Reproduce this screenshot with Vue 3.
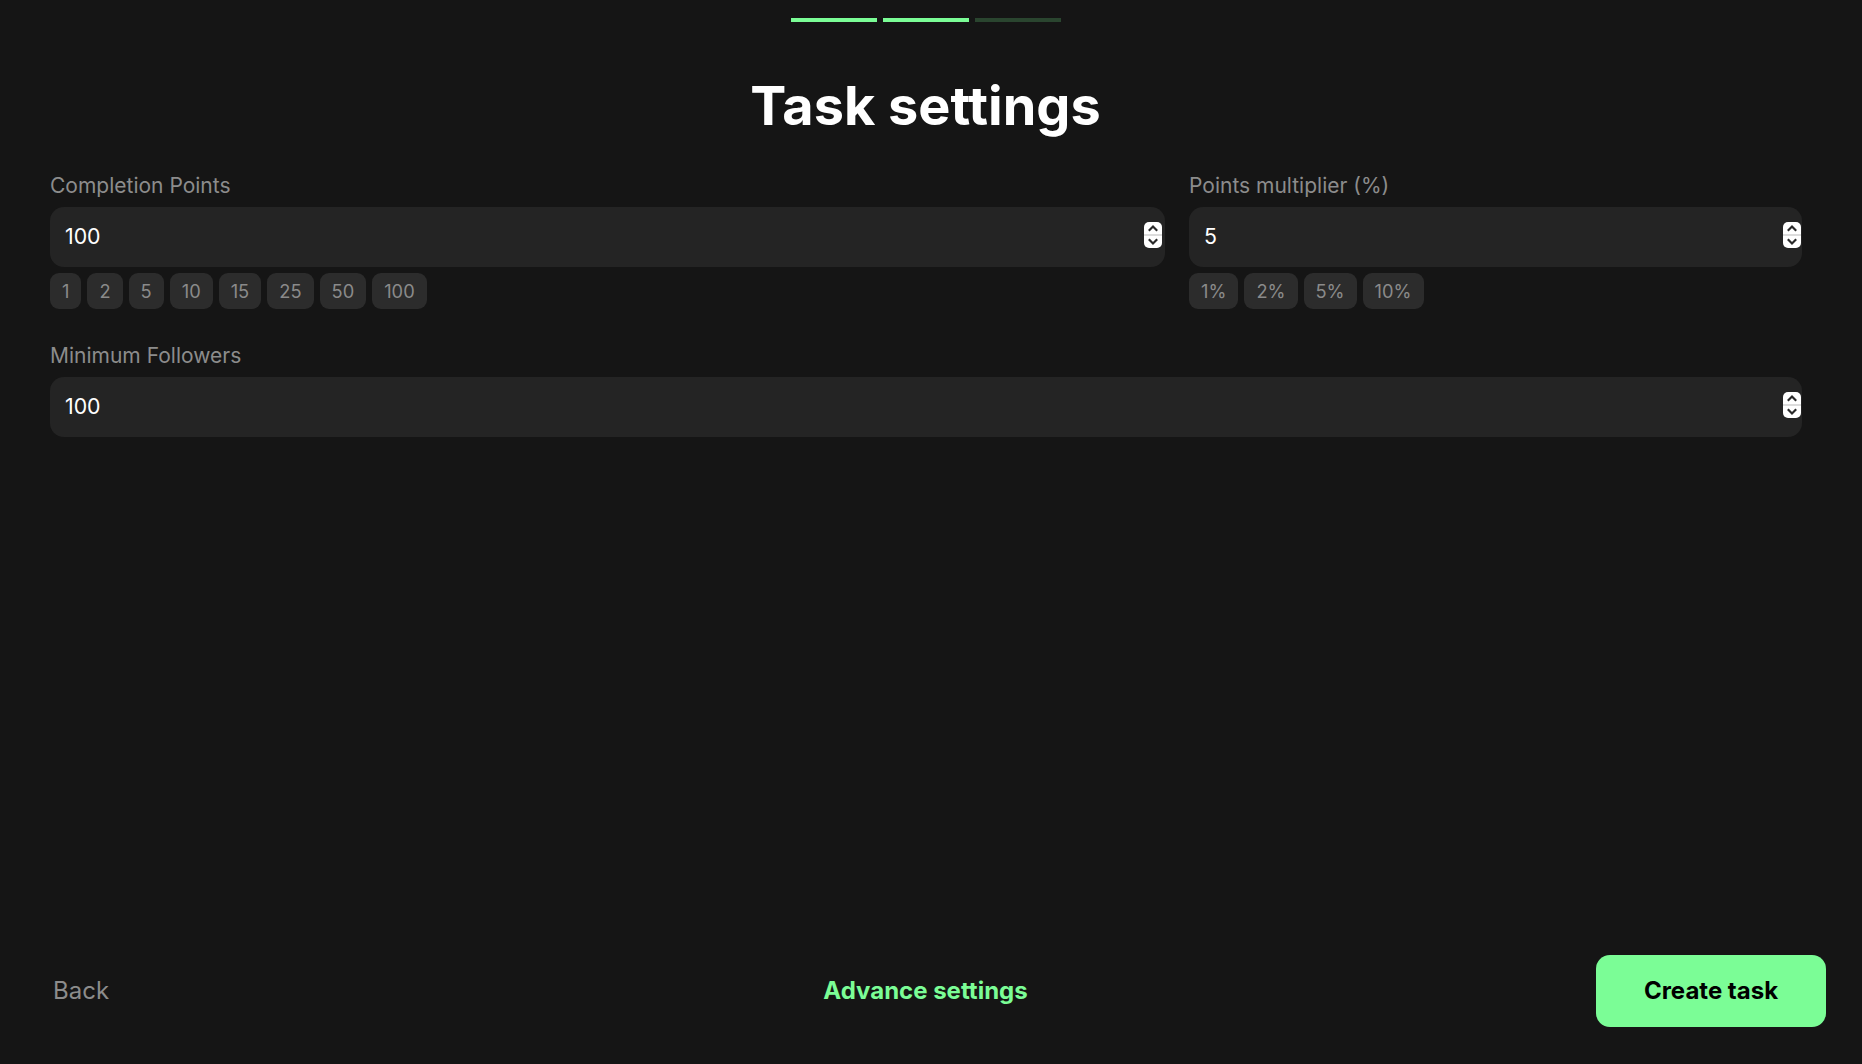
<template>
  <div class="page">
    <div class="steps">
      <span class="step on"></span>
      <span class="step on"></span>
      <span class="step"></span>
    </div>
    <h1 class="title">Task settings</h1>

    <div class="form">
      <div class="row">
        <div class="field grow">
          <label class="label">Completion Points</label>
          <div class="input">
            <span class="value">100</span>
            <svg class="spin" width="18" height="26" viewBox="0 0 18 26">
              <rect width="18" height="26" rx="5" fill="#fff" />
              <rect y="12" width="18" height="2" fill="#dcdcdc" />
              <path d="M4.8 8.7l4.2-4.2 4.2 4.2M4.8 17.3l4.2 4.2 4.2-4.2" fill="none" stroke="#2a2a2a" stroke-width="2.2" />
            </svg>
          </div>
          <div class="chips">
            <button v-for="p in points" :key="p" class="chip">{{ p }}</button>
          </div>
        </div>
        <div class="field side">
          <label class="label">Points multiplier (%)</label>
          <div class="input">
            <span class="value">5</span>
            <svg class="spin" width="18" height="26" viewBox="0 0 18 26">
              <rect width="18" height="26" rx="5" fill="#fff" />
              <rect y="12" width="18" height="2" fill="#dcdcdc" />
              <path d="M4.8 8.7l4.2-4.2 4.2 4.2M4.8 17.3l4.2 4.2 4.2-4.2" fill="none" stroke="#2a2a2a" stroke-width="2.2" />
            </svg>
          </div>
          <div class="chips">
            <button v-for="m in multipliers" :key="m" class="chip">{{ m }}</button>
          </div>
        </div>
      </div>

      <div class="field">
        <label class="label">Minimum Followers</label>
        <div class="input">
          <span class="value">100</span>
          <svg class="spin" width="18" height="26" viewBox="0 0 18 26">
            <rect width="18" height="26" rx="5" fill="#fff" />
            <rect y="12" width="18" height="2" fill="#dcdcdc" />
            <path d="M4.8 8.7l4.2-4.2 4.2 4.2M4.8 17.3l4.2 4.2 4.2-4.2" fill="none" stroke="#2a2a2a" stroke-width="2.2" />
          </svg>
        </div>
      </div>
    </div>

    <div class="footer">
      <button class="back">Back</button>
      <button class="advance">Advance settings</button>
      <button class="create">Create task</button>
    </div>
  </div>
</template>

<script setup>
const points = [1, 2, 5, 10, 15, 25, 50, 100];
const multipliers = ["1%", "2%", "5%", "10%"];
</script>

<style>
body {
  background: #151515;
}
</style>

<style scoped>
.page {
  height: 1064px;
  box-sizing: border-box;
  background: #151515;
  font-family: Inter, "Liberation Sans", sans-serif;
  display: flex;
  flex-direction: column;
  padding: 18px 11px 0 0;
}

.steps {
  display: flex;
  justify-content: center;
  gap: 6px;
}

.step {
  width: 86px;
  height: 4px;
  background: #2a452f;
}

.step.on {
  background: #7bfd96;
}

.title {
  margin: 51px 0 0;
  text-align: center;
  color: #fff;
  font-size: 54px;
  line-height: 66px;
  font-weight: 700;
}

.form {
  padding: 0 49px 0 50px;
  margin-top: 33px;
  display: flex;
  flex-direction: column;
  gap: 33px;
}

.row {
  display: flex;
  gap: 24px;
}

.field {
  display: flex;
  flex-direction: column;
}

.grow {
  flex: 1;
}

.side {
  width: 613px;
}

.label {
  color: #8c8c8c;
  font-size: 21px;
  line-height: 28px;
  margin-bottom: 7px;
}

.input {
  height: 60px;
  border-radius: 14px;
  background: #242424;
  color: #fff;
  font-size: 21.3px;
  padding: 0 1px 0 15px;
  display: flex;
  align-items: center;
  justify-content: space-between;
}

.grow .input {
  padding-right: 3px;
}

.value {
  padding-bottom: 2px;
}

.spin {
  margin-bottom: 4px;
}

.chips {
  display: flex;
  gap: 6px;
  margin-top: 6px;
}

.chip {
  height: 36px;
  padding: 0 12px;
  border: none;
  border-radius: 9px;
  background: #2c2c2c;
  color: #8a8a8a;
  font-family: inherit;
  font-size: 18.3px;
}

.footer {
  margin-top: auto;
  padding: 0 25px 37px;
  display: grid;
  grid-template-columns: 1fr auto 1fr;
  align-items: center;
}

.footer button {
  border: none;
  background: none;
  padding: 0 0 2px;
  font-family: inherit;
  font-size: 24px;
}

.footer .back {
  color: #8c8c8c;
  justify-self: start;
  padding-left: 28px;
}

.advance {
  color: #7bfd96;
  font-weight: 700;
}

.footer .create {
  justify-self: end;
  width: 230px;
  height: 72px;
  border-radius: 14px;
  background: #7bfd96;
  color: #000;
  font-weight: 700;
}
</style>
